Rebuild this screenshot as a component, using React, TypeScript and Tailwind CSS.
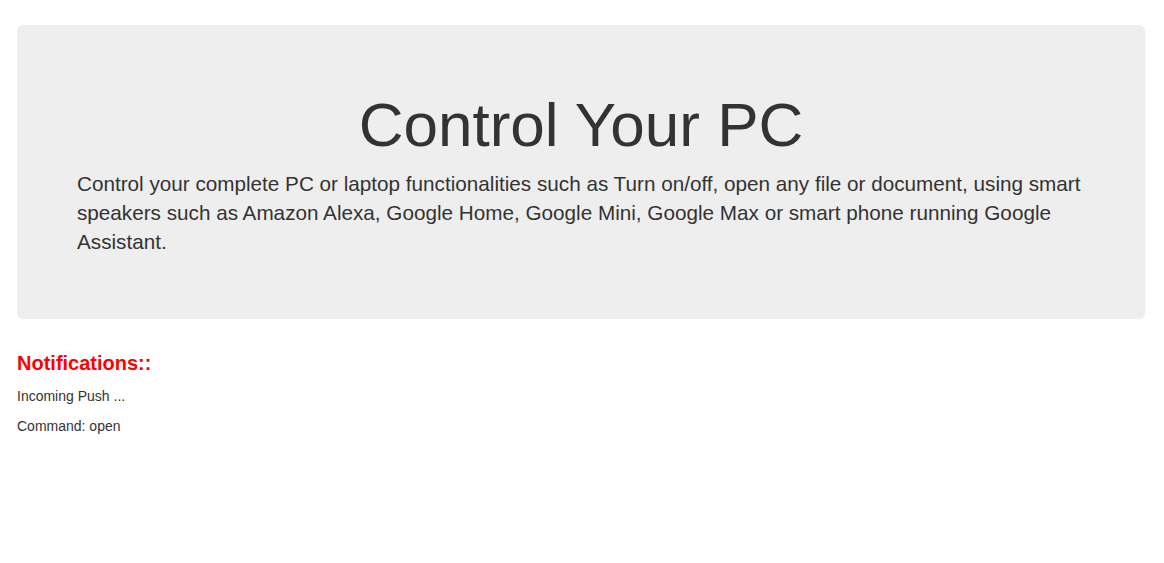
import React from "react";

export default function App() {
  return (
    <div
      className="min-h-screen bg-white pl-[17px] pr-[19px] pt-[25px] text-[#333] text-[14px] leading-[1.42857]"
      style={{ fontFamily: '"Liberation Sans", Arial, sans-serif' }}
    >
      <div className="rounded-[6px] bg-[#eeeeee] px-[60px] pt-[48px] pb-[48px]">
        <h1 className="mt-[18px] mb-[10px] text-center text-[62px] leading-[1.1] font-normal text-[#333]">
          Control Your PC
        </h1>
        <p className="mb-[15px] text-[20.7px] leading-[29px] font-normal">
          Control your complete PC or laptop functionalities such as Turn on/off, open any file or document, using smart
          speakers such as Amazon Alexa, Google Home, Google Mini, Google Max or smart phone running Google Assistant.
        </p>
      </div>
      <h4 className="mt-[33px] mb-[13px] text-[20px] leading-[1.1] font-bold text-[#ff0000]">Notifications::</h4>
      <p className="mb-[10px]">Incoming Push ...</p>
      <p className="mb-[10px]">Command: open</p>
    </div>
  );
}
